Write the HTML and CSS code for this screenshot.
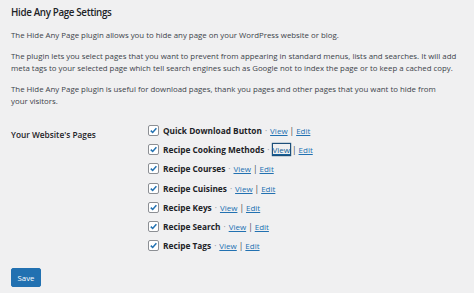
FILE: index.html
```html
<!DOCTYPE html>
<html>
<head>
<meta charset="utf-8">
<link rel="stylesheet" href="styles.css">
</head>
<body>
<div class="wrap">
  <h1 class="title">Hide Any Page Settings</h1>
  <p class="para">The Hide Any Page plugin allows you to hide any page on your WordPress website or blog.</p>
  <p class="para">The plugin lets you select pages that you want to prevent from appearing in standard menus, lists and searches. It will add meta tags to your selected page which tell search engines such as Google not to index the page or to keep a cached copy.</p>
  <p class="para">The Hide Any Page plugin is useful for download pages, thank you pages and other pages that you want to hide from your&nbsp;visitors.</p>
  <div class="form-row">
    <div class="label">Your Website's Pages</div>
    <ul class="pages">
      <li class="page"><span class="cb"><svg viewBox="0 0 10 10"><path d="M2 5.1 L4.1 7.2 L8.2 2.6" /></svg></span><b>Quick Download Button</b><span class="sep">·</span><a class="lnk">View</a><span class="bar">|</span><a class="lnk">Edit</a></li>
      <li class="page"><span class="cb"><svg viewBox="0 0 10 10"><path d="M2 5.1 L4.1 7.2 L8.2 2.6" /></svg></span><b>Recipe Cooking Methods</b><span class="sep">·</span><a class="lnk focus">View</a><span class="bar">|</span><a class="lnk">Edit</a></li>
      <li class="page"><span class="cb"><svg viewBox="0 0 10 10"><path d="M2 5.1 L4.1 7.2 L8.2 2.6" /></svg></span><b>Recipe Courses</b><span class="sep">·</span><a class="lnk">View</a><span class="bar">|</span><a class="lnk">Edit</a></li>
      <li class="page"><span class="cb"><svg viewBox="0 0 10 10"><path d="M2 5.1 L4.1 7.2 L8.2 2.6" /></svg></span><b>Recipe Cuisines</b><span class="sep">·</span><a class="lnk">View</a><span class="bar">|</span><a class="lnk">Edit</a></li>
      <li class="page"><span class="cb"><svg viewBox="0 0 10 10"><path d="M2 5.1 L4.1 7.2 L8.2 2.6" /></svg></span><b>Recipe Keys</b><span class="sep">·</span><a class="lnk">View</a><span class="bar">|</span><a class="lnk">Edit</a></li>
      <li class="page"><span class="cb"><svg viewBox="0 0 10 10"><path d="M2 5.1 L4.1 7.2 L8.2 2.6" /></svg></span><b>Recipe Search</b><span class="sep">·</span><a class="lnk">View</a><span class="bar">|</span><a class="lnk">Edit</a></li>
      <li class="page"><span class="cb"><svg viewBox="0 0 10 10"><path d="M2 5.1 L4.1 7.2 L8.2 2.6" /></svg></span><b>Recipe Tags</b><span class="sep">·</span><a class="lnk">View</a><span class="bar">|</span><a class="lnk">Edit</a></li>
    </ul>
  </div>
  <button class="save">Save</button>
</div>
</body>
</html>
```
FILE: styles.css
```css
html, body {
  margin: 0;
  padding: 0;
  background: #f0f0f1;
}
body {
  font-family: "Open Sans", "Noto Sans", sans-serif;
  color: #3c434a;
  font-size: 7.85px;
}
.wrap {
  padding: 5px 11px 0 11px;
}
.title {
  font-size: 9.8px;
  font-weight: 600;
  letter-spacing: -0.35px;
  color: #1d2327;
  margin: 0 0 8px 0;
  line-height: 16px;
}
.para {
  margin: 0 0 9px 0;
  line-height: 12px;
}
.form-row {
  display: flex;
  margin-top: 14px;
}
.label {
  width: 137px;
  flex: none;
  font-weight: 600;
  color: #1d2327;
  font-size: 8.3px;
  line-height: 12px;
  padding-top: 8px;
}
.pages {
  list-style: none;
  margin: 0;
  padding: 0;
}
.page {
  display: flex;
  align-items: center;
  height: 19.17px;
  font-size: 8.3px;
}
.page b {
  font-weight: 700;
  color: #1d2327;
}
.cb {
  width: 9px;
  height: 9px;
  border: 1px solid #8c8f94;
  border-radius: 2px;
  background: #fff;
  margin-right: 4px;
  display: flex;
}
.cb svg {
  width: 9px;
  height: 9px;
  fill: none;
  stroke: #2271b1;
  stroke-width: 1.7;
}
.sep {
  color: #8c8f94;
  margin: 0 3px;
}
.lnk {
  color: #2271b1;
  text-decoration: underline;
  font-size: 8px;
}
.focus {
  box-shadow: 0 0 0 1.2px #1d4f7a;
  color: #135e96;
}
.bar {
  margin: 0 2px;
  color: #3c434a;
}
.save {
  display: block;
  margin-top: 13px;
  background: #2271b1;
  border: 1px solid #2271b1;
  border-radius: 2px;
  color: #fff;
  font-family: "Open Sans", "Noto Sans", sans-serif;
  font-size: 7.8px;
  width: 30px;
  height: 19px;
  padding: 0;
}
```
